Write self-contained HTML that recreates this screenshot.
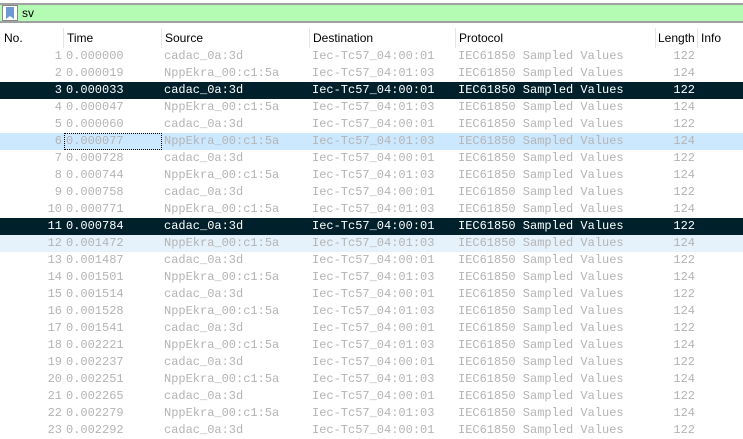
<!DOCTYPE html><html><head><style>
body{margin:0;width:743px;height:439px;overflow:hidden;background:#fff;position:relative;font-family:"Liberation Sans",sans-serif}
.fb{position:absolute;left:0;top:3px;width:743px;height:20px;box-sizing:border-box;border-top:2px solid #a0a0a0;border-bottom:2px solid #a0a0a0;background:#b4fcb4}
.bm{position:absolute;left:2px;top:0px;width:16px;height:16px;background:#fff;border:1px solid #888;box-sizing:border-box}
.bm svg{position:absolute;left:3px;top:1px}
.fb span{position:absolute;left:22px;top:1px;font-size:12px;color:#000}
.hd{position:absolute;top:28px;height:20px;font-size:12px;line-height:20px;color:#000}
.sep{position:absolute;top:28px;height:20px;width:1px;background:#e5e5e5}
.r{position:absolute;left:0;width:743px;height:17px;font-family:"Liberation Mono",monospace;font-size:12px;line-height:17px;color:#b4b4b4;white-space:pre}
.r span{position:absolute}
.r .n{right:681px;text-align:right}
.r .l{left:658px;width:37px;text-align:right}
.d{background:#00202b;color:#fff}
.s{background:#cce8ff}
.h{background:#e5f1fb}
.foc{position:absolute;left:64px;top:0;width:96px;height:15px;border:1px dotted #000}
</style></head><body>
<div class="fb"><div class="bm"><svg width="8" height="12"><path d="M0 0H8V12L4 9L0 12Z" fill="#6d9ad6"/></svg></div><span>sv</span></div>
<div class="hd" style="left:4px">No.</div><div class="sep" style="left:63px"></div>
<div class="hd" style="left:67px">Time</div><div class="sep" style="left:161px"></div>
<div class="hd" style="left:165px">Source</div><div class="sep" style="left:309px"></div>
<div class="hd" style="left:313px">Destination</div><div class="sep" style="left:455px"></div>
<div class="hd" style="left:459px">Protocol</div><div class="sep" style="left:655px"></div>
<div class="hd" style="left:658px">Length</div><div class="sep" style="left:697px"></div>
<div class="hd" style="left:701px">Info</div>
<div class="r" style="top:48px"><span class="n">1</span><span style="left:66px">0.000000</span><span style="left:164px">cadac_0a:3d</span><span style="left:312px">Iec-Tc57_04:00:01</span><span style="left:458px">IEC61850 Sampled Values</span><span class="l">122</span></div>
<div class="r" style="top:65px"><span class="n">2</span><span style="left:66px">0.000019</span><span style="left:164px">NppEkra_00:c1:5a</span><span style="left:312px">Iec-Tc57_04:01:03</span><span style="left:458px">IEC61850 Sampled Values</span><span class="l">124</span></div>
<div class="r d" style="top:82px"><span class="n">3</span><span style="left:66px">0.000033</span><span style="left:164px">cadac_0a:3d</span><span style="left:312px">Iec-Tc57_04:00:01</span><span style="left:458px">IEC61850 Sampled Values</span><span class="l">122</span></div>
<div class="r" style="top:99px"><span class="n">4</span><span style="left:66px">0.000047</span><span style="left:164px">NppEkra_00:c1:5a</span><span style="left:312px">Iec-Tc57_04:01:03</span><span style="left:458px">IEC61850 Sampled Values</span><span class="l">124</span></div>
<div class="r" style="top:116px"><span class="n">5</span><span style="left:66px">0.000060</span><span style="left:164px">cadac_0a:3d</span><span style="left:312px">Iec-Tc57_04:00:01</span><span style="left:458px">IEC61850 Sampled Values</span><span class="l">122</span></div>
<div class="r s" style="top:133px"><div class="foc"></div><span class="n">6</span><span style="left:66px">0.000077</span><span style="left:164px">NppEkra_00:c1:5a</span><span style="left:312px">Iec-Tc57_04:01:03</span><span style="left:458px">IEC61850 Sampled Values</span><span class="l">124</span></div>
<div class="r" style="top:150px"><span class="n">7</span><span style="left:66px">0.000728</span><span style="left:164px">cadac_0a:3d</span><span style="left:312px">Iec-Tc57_04:00:01</span><span style="left:458px">IEC61850 Sampled Values</span><span class="l">122</span></div>
<div class="r" style="top:167px"><span class="n">8</span><span style="left:66px">0.000744</span><span style="left:164px">NppEkra_00:c1:5a</span><span style="left:312px">Iec-Tc57_04:01:03</span><span style="left:458px">IEC61850 Sampled Values</span><span class="l">124</span></div>
<div class="r" style="top:184px"><span class="n">9</span><span style="left:66px">0.000758</span><span style="left:164px">cadac_0a:3d</span><span style="left:312px">Iec-Tc57_04:00:01</span><span style="left:458px">IEC61850 Sampled Values</span><span class="l">122</span></div>
<div class="r" style="top:201px"><span class="n">10</span><span style="left:66px">0.000771</span><span style="left:164px">NppEkra_00:c1:5a</span><span style="left:312px">Iec-Tc57_04:01:03</span><span style="left:458px">IEC61850 Sampled Values</span><span class="l">124</span></div>
<div class="r d" style="top:218px"><span class="n">11</span><span style="left:66px">0.000784</span><span style="left:164px">cadac_0a:3d</span><span style="left:312px">Iec-Tc57_04:00:01</span><span style="left:458px">IEC61850 Sampled Values</span><span class="l">122</span></div>
<div class="r h" style="top:235px"><span class="n">12</span><span style="left:66px">0.001472</span><span style="left:164px">NppEkra_00:c1:5a</span><span style="left:312px">Iec-Tc57_04:01:03</span><span style="left:458px">IEC61850 Sampled Values</span><span class="l">124</span></div>
<div class="r" style="top:252px"><span class="n">13</span><span style="left:66px">0.001487</span><span style="left:164px">cadac_0a:3d</span><span style="left:312px">Iec-Tc57_04:00:01</span><span style="left:458px">IEC61850 Sampled Values</span><span class="l">122</span></div>
<div class="r" style="top:269px"><span class="n">14</span><span style="left:66px">0.001501</span><span style="left:164px">NppEkra_00:c1:5a</span><span style="left:312px">Iec-Tc57_04:01:03</span><span style="left:458px">IEC61850 Sampled Values</span><span class="l">124</span></div>
<div class="r" style="top:286px"><span class="n">15</span><span style="left:66px">0.001514</span><span style="left:164px">cadac_0a:3d</span><span style="left:312px">Iec-Tc57_04:00:01</span><span style="left:458px">IEC61850 Sampled Values</span><span class="l">122</span></div>
<div class="r" style="top:303px"><span class="n">16</span><span style="left:66px">0.001528</span><span style="left:164px">NppEkra_00:c1:5a</span><span style="left:312px">Iec-Tc57_04:01:03</span><span style="left:458px">IEC61850 Sampled Values</span><span class="l">124</span></div>
<div class="r" style="top:320px"><span class="n">17</span><span style="left:66px">0.001541</span><span style="left:164px">cadac_0a:3d</span><span style="left:312px">Iec-Tc57_04:00:01</span><span style="left:458px">IEC61850 Sampled Values</span><span class="l">122</span></div>
<div class="r" style="top:337px"><span class="n">18</span><span style="left:66px">0.002221</span><span style="left:164px">NppEkra_00:c1:5a</span><span style="left:312px">Iec-Tc57_04:01:03</span><span style="left:458px">IEC61850 Sampled Values</span><span class="l">124</span></div>
<div class="r" style="top:354px"><span class="n">19</span><span style="left:66px">0.002237</span><span style="left:164px">cadac_0a:3d</span><span style="left:312px">Iec-Tc57_04:00:01</span><span style="left:458px">IEC61850 Sampled Values</span><span class="l">122</span></div>
<div class="r" style="top:371px"><span class="n">20</span><span style="left:66px">0.002251</span><span style="left:164px">NppEkra_00:c1:5a</span><span style="left:312px">Iec-Tc57_04:01:03</span><span style="left:458px">IEC61850 Sampled Values</span><span class="l">124</span></div>
<div class="r" style="top:388px"><span class="n">21</span><span style="left:66px">0.002265</span><span style="left:164px">cadac_0a:3d</span><span style="left:312px">Iec-Tc57_04:00:01</span><span style="left:458px">IEC61850 Sampled Values</span><span class="l">122</span></div>
<div class="r" style="top:405px"><span class="n">22</span><span style="left:66px">0.002279</span><span style="left:164px">NppEkra_00:c1:5a</span><span style="left:312px">Iec-Tc57_04:01:03</span><span style="left:458px">IEC61850 Sampled Values</span><span class="l">124</span></div>
<div class="r" style="top:422px"><span class="n">23</span><span style="left:66px">0.002292</span><span style="left:164px">cadac_0a:3d</span><span style="left:312px">Iec-Tc57_04:00:01</span><span style="left:458px">IEC61850 Sampled Values</span><span class="l">122</span></div>
</body></html>
